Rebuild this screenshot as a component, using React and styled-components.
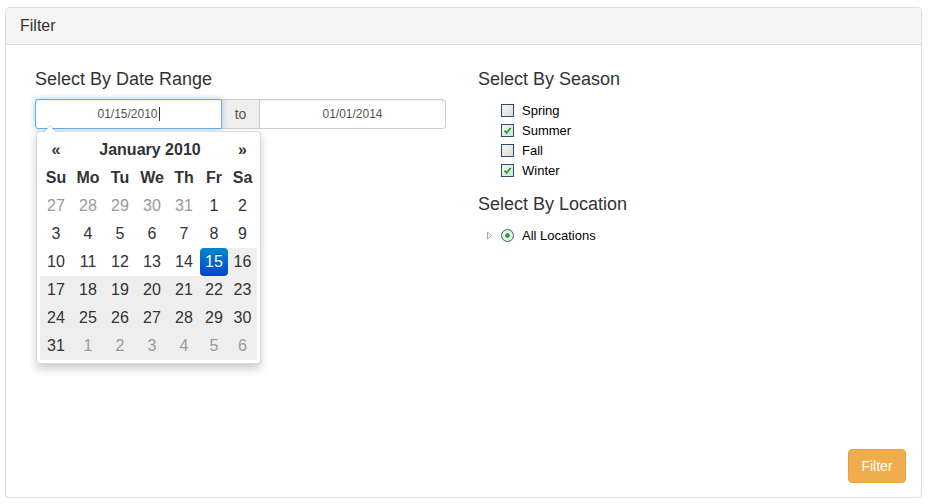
import styled, { createGlobalStyle } from "styled-components"

const GlobalStyle = createGlobalStyle`
    html, body {
        margin: 0;
        padding: 0;
        background: #fff;
    }
    body {
        font-family: "Liberation Sans", Arial, sans-serif;
        color: #333;
    }
`

const Panel = styled.div`
    margin: 7px 0 0 5px;
    width: 915px;
    height: 489px;
    border: 1px solid #ddd;
    border-radius: 4px;
    box-shadow: 0 1px 1px rgba(0, 0, 0, 0.05);
    display: flex;
    flex-direction: column;
    overflow: hidden;
`
const Heading = styled.div`
    height: 36px;
    padding: 0 14px;
    display: flex;
    align-items: center;
    background: #f5f5f5;
    border-bottom: 1px solid #ddd;
    font-size: 16px;
`
const Body = styled.div`
    flex: 1;
    display: flex;
    flex-direction: column;
    padding: 24px 15px 14px 29px;
`
const Columns = styled.div`
    display: grid;
    grid-template-columns: 443px 1fr;
`
const Title = styled.div`
    font-size: 18px;
    line-height: 20px;
    margin-top: ${props => props.spaced ? "14px" : "0"};
    margin-bottom: 10px;
`
const InputGroup = styled.div`
    position: relative;
    display: flex;
    width: 411px;
    height: 30px;
`
const Input = styled.div`
    flex: 1;
    display: flex;
    align-items: center;
    justify-content: center;
    font-size: 12px;
    color: #555;
    background: #fff;
    border: 1px solid ${props => props.focused ? "#66afe9" : "#ccc"};
    border-radius: ${props => props.side === "left" ? "3px 0 0 3px" : "0 3px 3px 0"};
    box-shadow: ${props => props.focused
        ? "inset 0 1px 1px rgba(0,0,0,.075), 0 0 6px rgba(102,175,233,.6)"
        : "inset 0 1px 1px rgba(0,0,0,.075)"};
    position: relative;
    z-index: ${props => props.focused ? 2 : 1};
`
const TextCaret = styled.span`
    display: inline-block;
    width: 1px;
    height: 14px;
    background: #333;
    margin-left: 1px;
`
const Addon = styled.div`
    width: 37px;
    display: flex;
    align-items: center;
    justify-content: center;
    font-size: 14px;
    color: #555;
    background: #eee;
    border-top: 1px solid #ccc;
    border-bottom: 1px solid #ccc;
`
const Picker = styled.div`
    position: absolute;
    top: 32px;
    left: 1px;
    z-index: 5;
    padding: 4px 3px 3px;
    background: #fff;
    border: 1px solid rgba(0, 0, 0, 0.15);
    border-radius: 4px;
    box-shadow: 0 5px 10px rgba(0, 0, 0, 0.2);

    &::before {
        content: "";
        position: absolute;
        top: -7px;
        left: 6px;
        border-left: 7px solid transparent;
        border-right: 7px solid transparent;
        border-bottom: 7px solid rgba(0, 0, 0, 0.2);
    }
    &::after {
        content: "";
        position: absolute;
        top: -6px;
        left: 7px;
        border-left: 6px solid transparent;
        border-right: 6px solid transparent;
        border-bottom: 6px solid #fff;
    }
`
const CalGrid = styled.div`
    display: grid;
    grid-template-columns: 32px 32px 32px 32px 32px 28px 29px;
    grid-auto-rows: 28px;
    font-size: 16px;
`
const Cell = styled.div`
    display: flex;
    align-items: center;
    justify-content: center;
    grid-column: ${props => props.span || "auto"};
    font-weight: ${props => props.bold ? "bold" : "normal"};
    color: ${props => props.active ? "#fff" : props.muted ? "#999" : "#333"};
    background: ${props => props.active
        ? "linear-gradient(to bottom, #0088cc, #0044cc)"
        : props.range ? "#eee" : "transparent"};
    border-radius: ${props => props.active ? "4px" : "0"};
    text-shadow: ${props => props.active ? "0 -1px 0 rgba(0,0,0,.25)" : "none"};
`
const List = styled.div`
    padding: 1px 0 0 23px;
`
const Row = styled.div`
    height: 20px;
    display: flex;
    align-items: center;
    font-size: 13px;
    color: #000;
`
const Box = styled.span`
    width: 11px;
    height: 11px;
    margin-right: 8px;
    border: 1px solid #2d4d6e;
    background: linear-gradient(135deg, #f4f4f4, #dcdcdc);
    display: flex;
    align-items: center;
    justify-content: center;
`
const Expander = styled.span`
    width: 15px;
    margin-left: -15px;
    display: flex;
    align-items: center;
`
const Radio = styled.span`
    width: 11px;
    height: 11px;
    margin-right: 8px;
    border: 1px solid #3e5f82;
    border-radius: 50%;
    background: radial-gradient(circle, #1faa2a 0 2px, #f3f3f3 2.6px, #dedede 100%);
`
const Footer = styled.div`
    margin-top: auto;
    display: flex;
    justify-content: flex-end;
`
const Button = styled.button`
    width: 58px;
    height: 34px;
    font-family: inherit;
    font-size: 14px;
    color: #fff;
    background: #f0ad4e;
    border: 1px solid #eea236;
    border-radius: 4px;
`

const seasons = [
    { name: "Spring", checked: false },
    { name: "Summer", checked: true },
    { name: "Fall", checked: false },
    { name: "Winter", checked: true },
]

const days = [
    ...[27, 28, 29, 30, 31].map(d => ({ d, muted: true })),
    ...Array.from({ length: 31 }, (_, i) => ({ d: i + 1 })),
    ...[1, 2, 3, 4, 5, 6].map(d => ({ d, muted: true, next: true })),
]

const Check = () => (
    <svg width="9" height="9" viewBox="0 0 9 9">
        <path d="M1.5 4.6 L3.6 6.8 L7.6 2" fill="none" stroke="#1da51f" strokeWidth="1.8" />
    </svg>
)

const App = () => {
    return (
        <>
            <GlobalStyle />
            <Panel>
                <Heading>Filter</Heading>
                <Body>
                    <Columns>
                        <div>
                            <Title>Select By Date Range</Title>
                            <InputGroup>
                                <Input side="left" focused>
                                    01/15/2010<TextCaret />
                                </Input>
                                <Addon>to</Addon>
                                <Input side="right">01/01/2014</Input>
                                <Picker>
                                    <CalGrid>
                                        <Cell bold>«</Cell>
                                        <Cell bold span="span 5">January 2010</Cell>
                                        <Cell bold>»</Cell>
                                        {["Su", "Mo", "Tu", "We", "Th", "Fr", "Sa"].map(w => (
                                            <Cell bold key={w}>{w}</Cell>
                                        ))}
                                        {days.map((item, i) => (
                                            <Cell
                                                key={i}
                                                muted={item.muted}
                                                active={!item.muted && item.d === 15}
                                                range={item.next || (!item.muted && item.d > 15)}
                                            >
                                                {item.d}
                                            </Cell>
                                        ))}
                                    </CalGrid>
                                </Picker>
                            </InputGroup>
                        </div>
                        <div>
                            <Title>Select By Season</Title>
                            <List>
                                {seasons.map(s => (
                                    <Row key={s.name}>
                                        <Box>{s.checked && <Check />}</Box>
                                        {s.name}
                                    </Row>
                                ))}
                            </List>
                            <Title spaced>Select By Location</Title>
                            <List>
                                <Row>
                                    <Expander>
                                        <svg width="7" height="9" viewBox="0 0 7 9">
                                            <path d="M1.5 1 L5.5 4.5 L1.5 8 Z" fill="#fff" stroke="#aaa" strokeWidth="1" />
                                        </svg>
                                    </Expander>
                                    <Radio />
                                    All Locations
                                </Row>
                            </List>
                        </div>
                    </Columns>
                    <Footer>
                        <Button>Filter</Button>
                    </Footer>
                </Body>
            </Panel>
        </>
    )
}

export default App
